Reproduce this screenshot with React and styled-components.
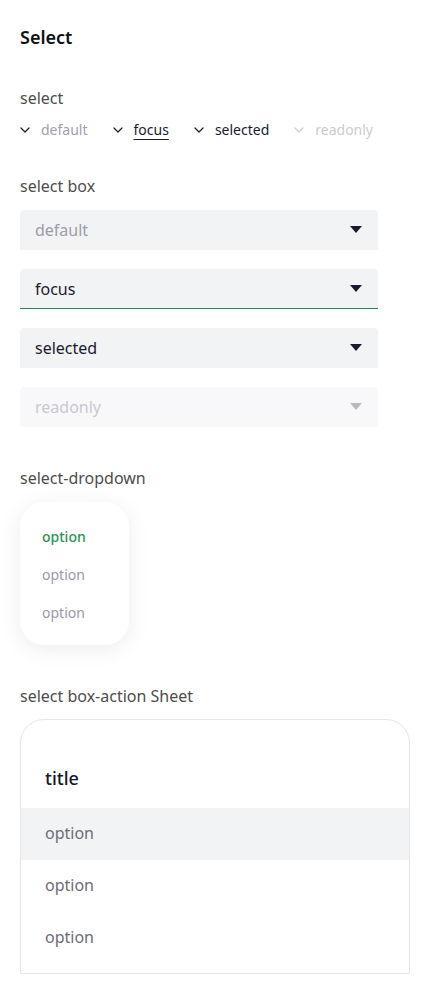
import React from 'react';
import styled, { createGlobalStyle } from 'styled-components';

const GlobalStyle = createGlobalStyle`
  body {
    margin: 0;
    background: #ffffff;
    font-family: "Noto Sans", Lato, sans-serif;
  }
`;

const Page = styled.div`
  padding: 24px 20px 20px;
  display: flex;
  flex-direction: column;
`;

const Title = styled.h1`
  margin: 0 0 37px;
  font-size: 18px;
  line-height: 26px;
  font-weight: 600;
  color: #111111;
`;

const Section = styled.section`
  display: flex;
  flex-direction: column;
  margin-bottom: ${(p) => p.$gap || 40}px;
`;

const Label = styled.div`
  font-size: 16px;
  line-height: 22px;
  color: #4d4d4d;
  margin-bottom: ${(p) => p.$gap || 13}px;
`;

const InlineRow = styled.div`
  display: flex;
  align-items: center;
  gap: 25px;
  height: 20px;
`;

const InlineSelect = styled.div`
  display: flex;
  align-items: center;
  gap: 11px;
  font-size: 14px;
  line-height: 20px;
  color: ${(p) => p.$color};

  & span {
    text-decoration: ${(p) => (p.$underline ? 'underline' : 'none')};
    text-underline-offset: 4px;
    text-decoration-thickness: 1px;
  }
`;

const BoxList = styled.div`
  display: flex;
  flex-direction: column;
  gap: 19px;
  width: 358px;
`;

const Box = styled.div`
  box-sizing: border-box;
  height: 40px;
  display: flex;
  align-items: center;
  justify-content: space-between;
  padding: 0 16px 0 15px;
  border-radius: 4px 4px 0 0;
  background: ${(p) => (p.$readonly ? '#f8f8fa' : '#f2f3f5')};
  border-bottom: 1px solid ${(p) => (p.$focus ? '#24894f' : 'transparent')};
  font-size: 16px;
  color: ${(p) => p.$color};
`;

const Dropdown = styled.div`
  box-sizing: border-box;
  width: 109px;
  padding: 16px 22px 13px;
  border-radius: 24px;
  background: #ffffff;
  box-shadow: 0 4px 22px rgba(0, 0, 0, 0.08);
  display: flex;
  flex-direction: column;
`;

const DropOption = styled.div`
  font-size: 14px;
  line-height: 38px;
  font-weight: ${(p) => (p.$active ? 500 : 400)};
  color: ${(p) => (p.$active ? '#27944f' : '#9a99a7')};
`;

const Sheet = styled.div`
  width: 390px;
  box-sizing: border-box;
  border: 1px solid #e6e6e8;
  border-radius: 24px 24px 0 0;
  padding-bottom: 9px;
  overflow: hidden;
`;

const SheetTitle = styled.div`
  padding: 45px 24px 17px;
  font-size: 18px;
  line-height: 26px;
  font-weight: 500;
  color: #15152a;
`;

const SheetOption = styled.div`
  box-sizing: border-box;
  height: 52px;
  display: flex;
  align-items: center;
  padding: 0 24px 3px;
  font-size: 16px;
  color: #6d6c78;
  background: ${(p) => (p.$active ? '#f2f3f5' : 'transparent')};
`;

const Chevron = ({ color }) => (
  <svg width="10" height="6" viewBox="0 0 10 6" fill="none">
    <path d="M1 1l4 4 4-4" stroke={color} strokeWidth="1.2" strokeLinecap="round" strokeLinejoin="round" />
  </svg>
);

const Caret = ({ color }) => (
  <svg width="12" height="7" viewBox="0 0 12 7">
    <path d="M0 0h12L6 7z" fill={color} />
  </svg>
);

const inlineSelects = [
  { text: 'default', color: '#a09fac', icon: '#1b1a2e' },
  { text: 'focus', color: '#1b1a2e', icon: '#1b1a2e', underline: true },
  { text: 'selected', color: '#1b1a2e', icon: '#1b1a2e' },
  { text: 'readonly', color: '#cbcbd1', icon: '#cbcbd1' },
];

const boxes = [
  { text: 'default', color: '#9d9ca8' },
  { text: 'focus', color: '#1b1a2e', focus: true },
  { text: 'selected', color: '#1b1a2e' },
  { text: 'readonly', color: '#c9c9cf', readonly: true },
];

export default function App() {
  return (
    <Page>
      <GlobalStyle />
      <Title>Select</Title>

      <Section $gap={35}>
        <Label $gap={11}>select</Label>
        <InlineRow>
          {inlineSelects.map((s) => (
            <InlineSelect key={s.text} $color={s.color} $underline={s.underline}>
              <Chevron color={s.icon} />
              <span>{s.text}</span>
            </InlineSelect>
          ))}
        </InlineRow>
      </Section>

      <Section>
        <Label>select box</Label>
        <BoxList>
          {boxes.map((b) => (
            <Box key={b.text} $color={b.color} $focus={b.focus} $readonly={b.readonly}>
              {b.text}
              <Caret color={b.readonly ? '#b9b9c1' : '#1b1a2e'} />
            </Box>
          ))}
        </BoxList>
      </Section>

      <Section>
        <Label>select-dropdown</Label>
        <Dropdown>
          <DropOption $active>option</DropOption>
          <DropOption>option</DropOption>
          <DropOption>option</DropOption>
        </Dropdown>
      </Section>

      <Section $gap={0}>
        <Label $gap={12}>select box-action Sheet</Label>
        <Sheet>
          <SheetTitle>title</SheetTitle>
          <SheetOption $active>option</SheetOption>
          <SheetOption>option</SheetOption>
          <SheetOption>option</SheetOption>
        </Sheet>
      </Section>
    </Page>
  );
}
